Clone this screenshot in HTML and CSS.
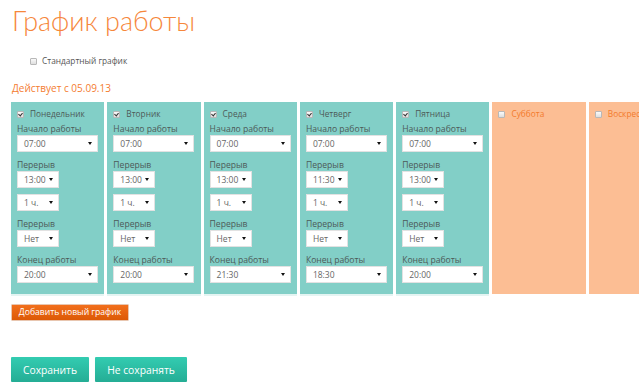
FILE: index.html
```html
<!DOCTYPE html>
<html lang="ru">
<head>
    <meta charset="UTF-8">
    <meta name="viewport" content="width=device-width, initial-scale=1.0">
    <title>График работы</title>
    <link rel="stylesheet" href="styles.css">
</head>
<body>
    <div class="page">
        <h1 class="title">График работы</h1>

        <div class="standard">
            <span class="check"></span>
            <span>Стандартный график</span>
        </div>

        <div class="since">Действует с 05.09.13</div>

        <!-- Дни недели -->
        <div class="week">
            <div class="day">
                <div class="day-head"><span class="check checked"></span>Понедельник</div>
                <div class="field-label">Начало работы</div>
                <div class="select wide"><span>07:00</span><i class="arrow"></i></div>
                <div class="field-label">Перерыв</div>
                <div class="select"><span>13:00</span><i class="arrow"></i></div>
                <div class="select"><span>1 ч.</span><i class="arrow"></i></div>
                <div class="field-label">Перерыв</div>
                <div class="select"><span>Нет</span><i class="arrow"></i></div>
                <div class="field-label">Конец работы</div>
                <div class="select wide"><span>20:00</span><i class="arrow"></i></div>
            </div>

            <div class="day">
                <div class="day-head"><span class="check checked"></span>Вторник</div>
                <div class="field-label">Начало работы</div>
                <div class="select wide"><span>07:00</span><i class="arrow"></i></div>
                <div class="field-label">Перерыв</div>
                <div class="select"><span>13:00</span><i class="arrow"></i></div>
                <div class="select"><span>1 ч.</span><i class="arrow"></i></div>
                <div class="field-label">Перерыв</div>
                <div class="select"><span>Нет</span><i class="arrow"></i></div>
                <div class="field-label">Конец работы</div>
                <div class="select wide"><span>20:00</span><i class="arrow"></i></div>
            </div>

            <div class="day">
                <div class="day-head"><span class="check checked"></span>Среда</div>
                <div class="field-label">Начало работы</div>
                <div class="select wide"><span>07:00</span><i class="arrow"></i></div>
                <div class="field-label">Перерыв</div>
                <div class="select"><span>13:00</span><i class="arrow"></i></div>
                <div class="select"><span>1 ч.</span><i class="arrow"></i></div>
                <div class="field-label">Перерыв</div>
                <div class="select"><span>Нет</span><i class="arrow"></i></div>
                <div class="field-label">Конец работы</div>
                <div class="select wide"><span>21:30</span><i class="arrow"></i></div>
            </div>

            <div class="day">
                <div class="day-head"><span class="check checked"></span>Четверг</div>
                <div class="field-label">Начало работы</div>
                <div class="select wide"><span>07:00</span><i class="arrow"></i></div>
                <div class="field-label">Перерыв</div>
                <div class="select"><span>11:30</span><i class="arrow"></i></div>
                <div class="select"><span>1 ч.</span><i class="arrow"></i></div>
                <div class="field-label">Перерыв</div>
                <div class="select"><span>Нет</span><i class="arrow"></i></div>
                <div class="field-label">Конец работы</div>
                <div class="select wide"><span>18:30</span><i class="arrow"></i></div>
            </div>

            <div class="day">
                <div class="day-head"><span class="check checked"></span>Пятница</div>
                <div class="field-label">Начало работы</div>
                <div class="select wide"><span>07:00</span><i class="arrow"></i></div>
                <div class="field-label">Перерыв</div>
                <div class="select"><span>13:00</span><i class="arrow"></i></div>
                <div class="select"><span>1 ч.</span><i class="arrow"></i></div>
                <div class="field-label">Перерыв</div>
                <div class="select"><span>Нет</span><i class="arrow"></i></div>
                <div class="field-label">Конец работы</div>
                <div class="select wide"><span>20:00</span><i class="arrow"></i></div>
            </div>

            <div class="day off">
                <div class="day-head"><span class="check"></span>Суббота</div>
            </div>

            <div class="day off">
                <div class="day-head"><span class="check"></span>Воскресенье</div>
            </div>
        </div>

        <button class="btn-add">Добавить новый график</button>

        <div class="actions">
            <button class="btn-save">Сохранить</button>
            <button class="btn-save">Не сохранять</button>
        </div>
    </div>
</body>
</html>
```

FILE: styles.css
```css
body {
    margin: 0;
    font-family: 'Open Sans', 'DejaVu Sans', sans-serif;
    background: #fff;
    overflow: hidden;
}

.page {
    padding: 0 11px;
}

.title {
    margin: 0;
    font-family: Lato, 'Open Sans', sans-serif;
    font-size: 27px;
    font-weight: 300;
    line-height: 41px;
    color: #f6873b;
    padding-left: 1px;
}

.standard {
    display: flex;
    align-items: center;
    margin-top: 14px;
    padding-left: 19px;
    font-size: 8.3px;
    line-height: 12px;
    color: #555;
}

.standard .check {
    margin-right: 5px;
}

.since {
    margin-top: 14px;
    font-size: 10px;
    line-height: 14px;
    color: #f47c30;
    padding-left: 1px;
}

/* Колонки дней */
.week {
    display: flex;
    gap: 3px;
    margin-top: 7px;
    width: 700px;
}

.day {
    flex: 0 0 93.3px;
    box-sizing: border-box;
    height: 192px;
    padding: 6px 5px 0 6px;
    background: #82cfc7;
    box-shadow: 0 2px 0 #e4f4f2;
}

.day.off {
    background: #fcbe94;
    box-shadow: none;
}

.day-head {
    display: flex;
    align-items: center;
    font-size: 8.3px;
    line-height: 12px;
    color: #4d5a58;
    margin-bottom: 3px;
}

.day-head .check {
    margin-right: 6px;
}

.day.off .day-head {
    color: #f37a2b;
}

.check {
    display: inline-block;
    width: 5px;
    height: 5px;
    border: 1px solid #b8b8b8;
    border-radius: 1px;
    background: linear-gradient(#fafafa, #dedede);
    position: relative;
}

.check.checked::after {
    content: "";
    position: absolute;
    left: 1px;
    top: 0;
    width: 2px;
    height: 3px;
    border: solid #333;
    border-width: 0 1px 1px 0;
    transform: rotate(40deg);
}

.field-label {
    font-size: 8.6px;
    line-height: 12px;
    color: #4d5a58;
}

.select {
    display: flex;
    align-items: center;
    justify-content: space-between;
    box-sizing: border-box;
    width: 42px;
    height: 17px;
    margin-bottom: 6.7px;
    padding: 0 5px 0 6px;
    background: #fff;
    border: 1px solid #e2e2e2;
    font-size: 8.5px;
    color: #666;
}

.select.wide {
    width: 81px;
}

.arrow {
    width: 0;
    height: 0;
    border-left: 2px solid transparent;
    border-right: 2px solid transparent;
    border-top: 3px solid #111;
}

/* Кнопки */
.btn-add {
    display: block;
    margin-top: 10px;
    width: 118px;
    height: 17px;
    padding: 0;
    border: 1px solid #e8c6b0;
    border-radius: 1px;
    background: linear-gradient(#f26f1c, #dc5906);
    color: #fff;
    font-family: 'Open Sans', sans-serif;
    font-size: 8.6px;
    line-height: 15px;
}

.actions {
    display: flex;
    gap: 6px;
    margin-top: 36px;
}

.btn-save {
    height: 25px;
    padding: 0;
    border: none;
    border-radius: 1px;
    background: linear-gradient(#33ccb1, #25ad95);
    color: #fff;
    font-family: 'Open Sans', sans-serif;
    font-size: 10.3px;
    box-shadow: 0 1px 1px rgba(0, 0, 0, 0.08);
}

.btn-save:first-child {
    width: 78px;
}

.btn-save:last-child {
    width: 92px;
}
```
